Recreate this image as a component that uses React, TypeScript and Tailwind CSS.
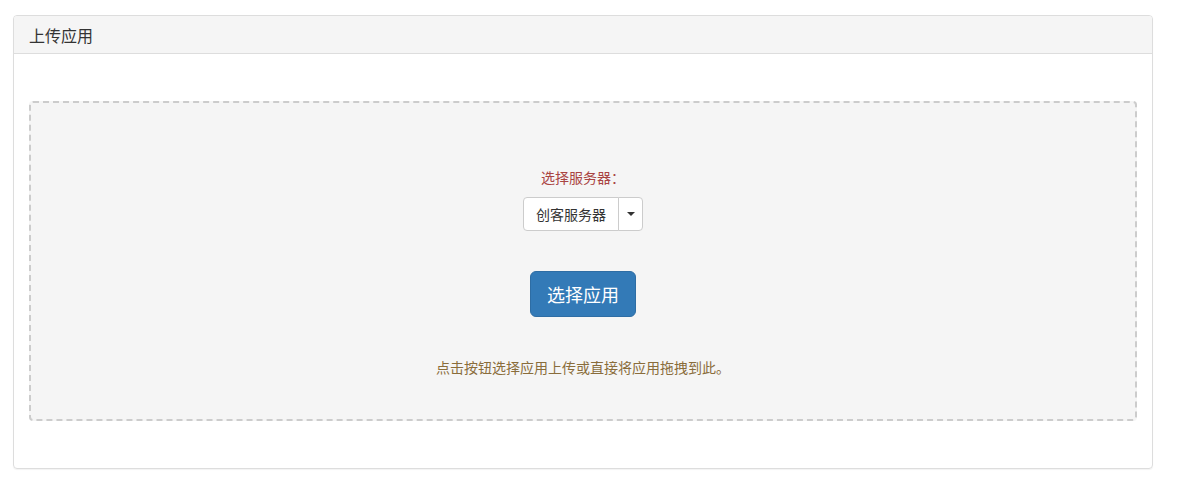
import React from "react";

export default function App() {
  const font = { fontFamily: '"Noto Sans CJK SC", "Liberation Sans", sans-serif' };
  return (
    <div className="w-[1179px] h-[491px] bg-white pt-[15px] pl-[13px]" style={font}>
      <div className="w-[1140px] border border-[#ddd] rounded-[4px] shadow-[0_1px_1px_rgba(0,0,0,0.05)] overflow-hidden">
        <div className="h-[38px] bg-[#f5f5f5] border-b border-[#ddd] px-[15px] flex items-center text-[16px] text-[#333]">
          上传应用
        </div>
        <div className="px-[15px] pt-[47px] pb-[47px]">
          <div className="h-[320px] bg-[#f5f5f5] border-2 border-dashed border-[#ccc] rounded-[4px] flex flex-col items-center pt-[64px]">
            <div className="h-[20px] leading-[20px] text-[14px] text-[#a94442]">选择服务器：</div>
            <div className="mt-[10px] flex h-[34px]">
              <div className="h-[34px] px-[12px] border border-[#ccc] rounded-l-[4px] bg-white flex items-center text-[14px] text-[#333]">
                创客服务器
              </div>
              <div className="h-[34px] w-[25px] -ml-px border border-[#ccc] rounded-r-[4px] bg-white flex items-center justify-center">
                <span className="block w-0 h-0 border-l-[4px] border-r-[4px] border-t-[4px] border-l-transparent border-r-transparent border-t-[#333]" />
              </div>
            </div>
            <div className="mt-[40px] h-[46px] px-[16px] bg-[#337ab7] border border-[#2e6da4] rounded-[6px] flex items-center text-[18px] text-white">
              选择应用
            </div>
            <div className="mt-[40px] h-[20px] leading-[20px] text-[14px] text-[#8a6d3b]">
              点击按钮选择应用上传或直接将应用拖拽到此。
            </div>
          </div>
        </div>
      </div>
    </div>
  );
}
